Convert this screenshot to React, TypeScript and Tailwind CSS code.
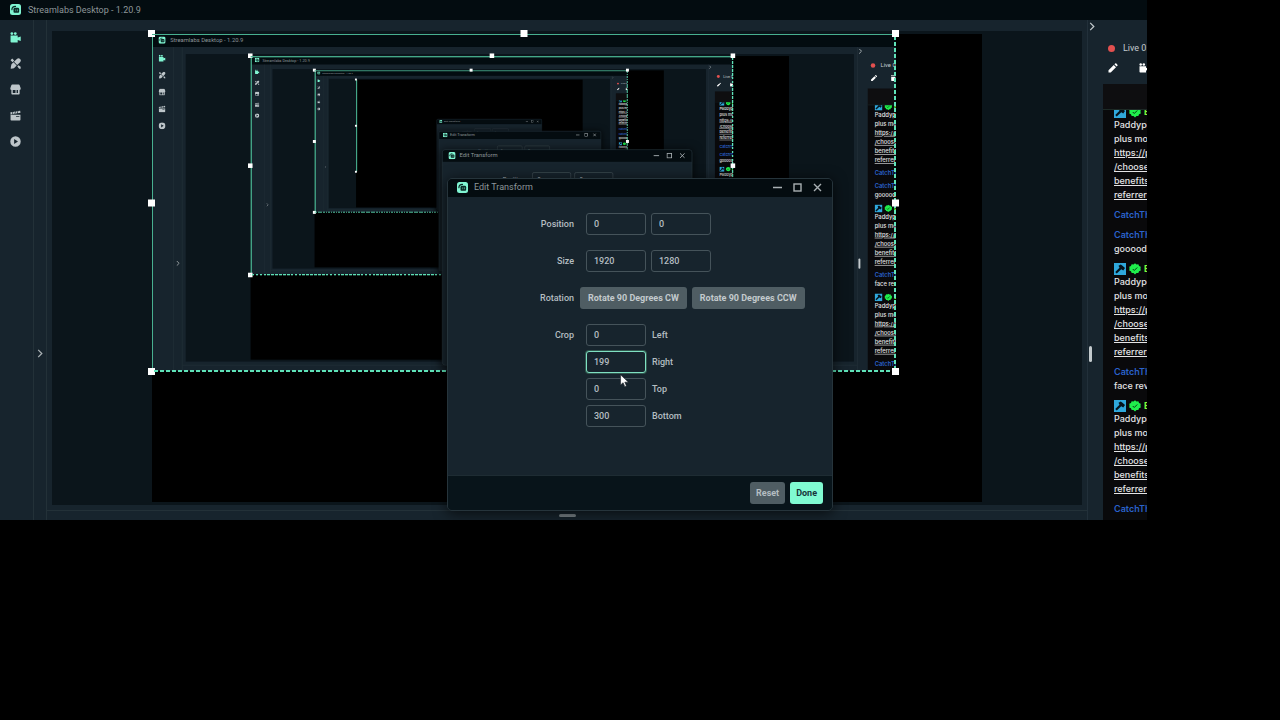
import { useId } from "react";
import type { ReactNode } from "react";

type IconProps = { className?: string };

// How many times the desktop is captured inside itself
const MAX_DEPTH = 3;

// Outline thickness grows with depth so the line stays visible once scaled down
const topLine = ["h-px", "h-[2px]", "h-[2px]", "h-[3px]"];
const leftLine = ["w-px", "w-[2px]", "w-[3px]", "w-[4px]"];

function Logo({ className }: IconProps) {
  return (
    <svg viewBox="0 0 22 22" className={className} aria-hidden="true">
      <rect width="22" height="22" rx="5" fill="#80f5d2" />
      <path d="M3.800 11.500C3.800 7.200 6.600 4.800 11 4.800" stroke="#0b2a27" strokeWidth="2.400" strokeLinecap="round" fill="none" />
      <path
        d="M7 10.500A2.800 2.800 0 0 1 9.800 7.700H15.500a2.800 2.800 0 0 1 2.800 2.800v5a2 2 0 0 1-2 2H9a2 2 0 0 1-2-2z"
        fill="#0b2a27"
      />
      <path d="M11.500 11.500v2.300M15 11.500v2.300" stroke="#80f5d2" strokeWidth="1" strokeLinecap="round" />
    </svg>
  );
}

function CameraIcon({ className }: IconProps) {
  return (
    <svg viewBox="0 0 20 20" className={className} fill="currentColor" aria-hidden="true">
      <circle cx="3.400" cy="2.800" r="2.500" />
      <circle cx="9.600" cy="2.800" r="2.500" />
      <path d="M1 6.300h13v3.600l5.500-1.700v8.200L14 14.500V19H2.500A1.500 1.500 0 0 1 1 17.500z" />
    </svg>
  );
}

function ThemesIcon({ className }: IconProps) {
  return (
    <svg viewBox="0 0 20 20" className={className} fill="currentColor" aria-hidden="true">
      <path d="M12.500 1.700a3.900 3.900 0 0 1 5.800 5.800L13 12.800 7.200 7zM6.300 7.900l5.800 5.800-4 4C6.200 19.300 3.500 19.500 1 19.300c1-1.500.3-4 1.700-7.800z" />
      <path d="M1 4 4 1l3.600 3.600-3 3zM13.300 15.200l2.200-2.200 3.900 2.800v3.700h-2.800z" />
    </svg>
  );
}

function StoreIcon({ className }: IconProps) {
  return (
    <svg viewBox="0 0 20 20" className={className} fill="currentColor" aria-hidden="true">
      <path
        d="M4 1h12a1.500 1.500 0 0 1 1.400 1L19.500 7.500a2.800 2.800 0 0 1-2 3.200V17.500a1.500 1.500 0 0 1-1.500 1.500H4a1.500 1.500 0 0 1-1.500-1.500v-6.800a2.800 2.800 0 0 1-2-3.200L2.600 2A1.500 1.500 0 0 1 4 1zM5 11v5.500h5V11zm7 0v5.500h2.500V11z"
        fillRule="evenodd"
      />
    </svg>
  );
}

function ClapperIcon({ className }: IconProps) {
  return (
    <svg viewBox="0 0 20 20" className={className} fill="currentColor" aria-hidden="true">
      <path d="M.8 4.300 4.500 3.700 3.500 7.600 1 8zM5.700 3.500l3.500-.6-1 3.900-3.500.6zM10.400 2.700l3.500-.6-1 3.900-3.500.6zM15.100 1.900l3.400-.6.600 3.700-5 .8z" />
      <path
        d="M1 8.800h18v8.700a1.500 1.500 0 0 1-1.500 1.500h-15A1.500 1.500 0 0 1 1 17.500zm10 2.700v1.300h6v-1.300z"
        fillRule="evenodd"
      />
    </svg>
  );
}

function PlayIcon({ className }: IconProps) {
  return (
    <svg viewBox="0 0 20 20" className={className} fill="currentColor" aria-hidden="true">
      <path d="M10 .5a9.500 9.500 0 1 1 0 19 9.500 9.500 0 0 1 0-19zM7.500 5.500v9l7-4.500z" fillRule="evenodd" />
    </svg>
  );
}

function PencilIcon({ className }: IconProps) {
  return (
    <svg viewBox="0 0 20 20" className={className} fill="currentColor" aria-hidden="true">
      <path d="M1 14.500 11.500 4l4.500 4.500L5.500 19H1zM12.800 2.700l1.500-1.500a1.700 1.700 0 0 1 2.400 0l2.100 2.100a1.700 1.700 0 0 1 0 2.400L17.300 7.200z" />
    </svg>
  );
}

function Chevron({ className }: IconProps) {
  return (
    <svg viewBox="0 0 6 10" className={className} fill="none" stroke="currentColor" strokeWidth="1.400" aria-hidden="true">
      <path d="M1 1l4 4-4 4" />
    </svg>
  );
}

function HammerBadge() {
  return (
    <svg viewBox="0 0 24 24" className="size-3 shrink-0" aria-hidden="true">
      <rect width="24" height="24" fill="#2fa8dc" />
      <path d="M9 5.500 13.500 3 17 5.500 22 10l-3.500 5-4-2.500L5.500 21 2.500 18l8.500-8.500z" fill="#05131c" />
    </svg>
  );
}

function VerifiedBadge() {
  return (
    <svg viewBox="0 0 24 24" className="size-3 shrink-0" aria-hidden="true">
      <path
        d="M12 .5l3 2.300 3.700-.4 1.400 3.500 3.400 1.500-.5 3.700 .5 3.700-3.400 1.500-1.400 3.500-3.700 .4-3 2.800-3-2.800-3.700-.4-1.400-3.500L.5 14.800 1 11.100.5 7.400l3.400-1.500 1.400-3.500 3.700.4z"
        fill="#1fee4c"
      />
      <path d="M7.500 12l3 3L16.500 9" stroke="#063b12" strokeWidth="2" fill="none" />
    </svg>
  );
}

const navItems = [
  { label: "Editor", Icon: CameraIcon, active: true },
  { label: "Themes", Icon: ThemesIcon, active: false },
  { label: "App Store", Icon: StoreIcon, active: false },
  { label: "Highlighter", Icon: ClapperIcon, active: false },
  { label: "Recordings", Icon: PlayIcon, active: false },
];

function BotMessage() {
  return (
    <div>
      <div className="flex h-[13px] items-center gap-[3px] font-bold text-[#7dfa3c]">
        <HammerBadge />
        <VerifiedBadge />
        <span>B</span>
      </div>
      <p>Paddypo</p>
      <p>plus mor</p>
      <a href="#referral" className="block underline">
        https://p
        <br />
        /choose
        <br />
        benefits
        <br />
        referrerC
      </a>
    </div>
  );
}

function UserMessage({ text }: { text?: string }) {
  return (
    <div>
      <p className="font-semibold text-[#2a62cc]">CatchTh</p>
      {text && <p>{text}</p>}
    </div>
  );
}

function ChatPanel() {
  return (
    <div className="flex h-0 min-h-full min-w-0 flex-1 flex-col overflow-hidden">
      <div className="flex h-16 shrink-0 flex-col gap-[3px] pt-5 pl-[5px]">
        <div className="flex h-4 items-center gap-2">
          <span className="size-[7px] shrink-0 rounded-full bg-[#e2504f]" />
          <span className="text-[9px] leading-4 whitespace-nowrap text-[#c3cacd]">Live 0</span>
        </div>
        <div className="flex h-[18px] items-center gap-[21px] text-white">
          <button type="button" aria-label="Edit stream info" className="shrink-0">
            <PencilIcon className="size-[10px]" />
          </button>
          <button type="button" aria-label="Stream camera" className="shrink-0">
            <CameraIcon className="size-[10px]" />
          </button>
        </div>
      </div>
      <div className="h-[26px] shrink-0 border-b border-[#1d2a26] bg-[#0e0e10]" />
      <div className="min-h-0 flex-1 overflow-hidden bg-[#09090b] pl-[11px]">
        <div className="-mt-[5px] flex flex-col gap-[6px] font-['Inter',sans-serif] text-[9px] leading-[14px] font-medium whitespace-nowrap text-[#e4e4e6]">
          <BotMessage />
          <UserMessage />
          <UserMessage text="gooood" />
          <BotMessage />
          <UserMessage text="face rev" />
          <BotMessage />
          <UserMessage />
        </div>
      </div>
    </div>
  );
}

type NumberFieldProps = { id?: string; value: string; label?: string; focused?: boolean };

function NumberField({ id, value, label, focused }: NumberFieldProps) {
  return (
    <input
      id={id}
      type="text"
      aria-label={label}
      defaultValue={value}
      className={
        focused
          ? "h-[22px] w-[60px] rounded-[3px] border border-[#7fe0c2] bg-[#17242d] px-[7px] text-[#b4bdc1] ring-1 ring-[#31594f] outline-none"
          : "h-[22px] w-[60px] rounded-[3px] border border-[#45535a] bg-[#17242d] px-[7px] text-[#b4bdc1] outline-none"
      }
    />
  );
}

function FormRow({ label, children }: { label: string; children: ReactNode }) {
  return (
    <div className="flex">
      <span className="mr-3 w-[126px] shrink-0 text-right leading-[22px]">{label}</span>
      {children}
    </div>
  );
}

const cropFields = [
  { label: "Left", value: "0" },
  { label: "Right", value: "199" },
  { label: "Top", value: "0" },
  { label: "Bottom", value: "300" },
];

// A captured dialog is mostly covered by the one above it, so it keeps only its first row
function EditTransform({ captured }: { captured: boolean }) {
  const id = useId();

  return (
    <section
      aria-label="Edit Transform"
      className="absolute top-[178px] left-[447px] flex min-h-[333px] w-[386px] flex-col overflow-hidden rounded-[5px] border border-[#26343b] bg-[#17242d] text-[9px] leading-4 text-[#b4bdc1] shadow-[0_2px_14px_rgba(0,0,0,0.7)]"
    >
      <header className="flex h-[18px] items-center bg-[#040c10] pr-[10px] pb-[2px] pl-[9px] text-[#8d9699]">
        <Logo className="size-[11px]" />
        <h2 className="ml-[6px] flex-1">Edit Transform</h2>
        <div className="flex items-center gap-[11px] text-[#a9b0b3]">
          <button type="button" aria-label="Minimize">
            <svg viewBox="0 0 9 9" className="size-[9px]" stroke="currentColor" strokeWidth="1.400">
              <path d="M0 4.500h9" />
            </svg>
          </button>
          <button type="button" aria-label="Maximize">
            <svg viewBox="0 0 9 9" className="size-[9px]" stroke="currentColor" strokeWidth="1.400" fill="none">
              <rect x="1" y="1" width="7" height="7" />
            </svg>
          </button>
          <button type="button" aria-label="Close">
            <svg viewBox="0 0 9 9" className="size-[9px]" stroke="currentColor" strokeWidth="1.400">
              <path d="M1 1l7 7M8 1 1 8" />
            </svg>
          </button>
        </div>
      </header>

      <form className="flex flex-1 flex-col gap-[15px] pt-4 font-medium">
        <FormRow label="Position">
          <div className="flex gap-[5px]">
            <NumberField value="0" label="Position X" />
            <NumberField value="0" label="Position Y" />
          </div>
        </FormRow>
        {!captured && (
          <>
            <FormRow label="Size">
              <div className="flex gap-[5px]">
                <NumberField value="1920" label="Width" />
                <NumberField value="1280" label="Height" />
              </div>
            </FormRow>
            <FormRow label="Rotation">
              <div className="-ml-[6px] flex gap-[5px] font-bold text-[#c3cacd]">
                <button type="button" className="h-[22px] rounded-[3px] bg-[#4f5d63] px-2 whitespace-nowrap">
                  Rotate 90 Degrees CW
                </button>
                <button type="button" className="h-[22px] rounded-[3px] bg-[#4f5d63] px-2 whitespace-nowrap">
                  Rotate 90 Degrees CCW
                </button>
              </div>
            </FormRow>
            <FormRow label="Crop">
              <div className="flex flex-col gap-[5px]">
                {cropFields.map((field) => (
                  <div key={field.label} className="flex items-center gap-[6px]">
                    <NumberField id={`${id}-${field.label}`} value={field.value} focused={field.label === "Right"} />
                    <label htmlFor={`${id}-${field.label}`}>{field.label}</label>
                  </div>
                ))}
              </div>
            </FormRow>
          </>
        )}
      </form>

      {!captured && (
        <footer className="flex justify-end gap-[5px] border-t border-[#1e2c33] bg-[#08141a] px-[9px] py-[6px] font-bold">
          <button type="button" className="h-[22px] rounded-[3px] bg-[#4f5d63] px-[6px] text-[#b4bdc1]">
            Reset
          </button>
          <button type="button" className="h-[22px] rounded-[3px] bg-[#80fbd2] px-[6px] text-[#17343a]">
            Done
          </button>
        </footer>
      )}
    </section>
  );
}

const handle = "absolute size-[7px] bg-white";

function Selection({ depth }: { depth: number }) {
  const last = depth === MAX_DEPTH;

  return (
    <div className="pointer-events-none absolute inset-0">
      <div className={`absolute top-0 left-0 h-full bg-[#48b090] ${leftLine[depth]}`} />
      <span className={`${handle} -top-1 -left-1`} />
      <span className={`${handle} top-1/2 -left-1 -translate-y-1/2`} />
      <span className={`${handle} -bottom-1 -left-1`} />
      {!last && (
        <>
          <div className={`absolute top-0 left-0 w-full bg-[#48b090] ${topLine[depth]}`} />
          <div className="absolute top-0 right-0 h-full w-[2px] bg-[repeating-linear-gradient(180deg,transparent_0_2px,#5fe3b8_2px_6px)]" />
          <div className="absolute -bottom-px left-0 h-[2px] w-full bg-[repeating-linear-gradient(90deg,transparent_0_2px,#5fe3b8_2px_6px)]" />
          <span className={`${handle} -top-1 left-1/2 -translate-x-1/2`} />
          <span className={`${handle} -top-1 -right-[3px]`} />
          <span className={`${handle} top-1/2 -right-[3px] -translate-y-1/2`} />
          <span className={`${handle} -right-[3px] -bottom-1`} />
        </>
      )}
    </div>
  );
}

function Stage({ depth }: { depth: number }) {
  return (
    <div className="flex flex-1 justify-center bg-[#0b151b] py-[3px]">
      <div className="h-[468px] w-[830px] shrink-0 bg-black">
        <div className="relative h-[337px] w-[744px]">
          {depth < MAX_DEPTH && (
            <div className="h-full overflow-hidden" inert>
              <div className="w-[1147px] origin-top-left scale-[0.6487]">
                <DesktopWindow depth={depth + 1} />
              </div>
            </div>
          )}
          <Selection depth={depth} />
        </div>
      </div>
    </div>
  );
}

function DesktopWindow({ depth }: { depth: number }) {
  return (
    <div className="relative flex flex-col overflow-hidden bg-[#17242d]">
      <header className="flex h-5 items-center gap-[7px] bg-[#030c10] pb-px pl-[10px] text-[9px] leading-4 text-[#8d9699]">
        <Logo className="size-[11px]" />
        <h1>Streamlabs Desktop - 1.20.9</h1>
      </header>

      <div className="flex">
        <nav className="flex w-[33px] shrink-0 flex-col gap-[15px] pt-3 pl-[10px]">
          {navItems.map(({ label, Icon, active }) => (
            <button
              key={label}
              type="button"
              aria-label={label}
              className={active ? "size-[11px] text-[#80f5d2]" : "size-[11px] text-[#bdc5c9]"}
            >
              <Icon className="size-[11px]" />
            </button>
          ))}
        </nav>
        <div className="flex w-[14px] shrink-0 items-end justify-center border-x border-[#233138] pb-[162px]">
          <button type="button" aria-label="Expand sidebar" className="text-[#a9b0b3]">
            <Chevron className="h-[9px] w-[6px]" />
          </button>
        </div>

        <main className="min-w-0 flex-1">
          <div className="flex px-[5px] pt-[11px] pb-[5px]">
            <Stage depth={depth} />
          </div>
          <div className="flex h-[10px] items-center justify-center border-t border-[#233138] pb-px">
            <span className="h-[3px] w-[17px] rounded-full bg-[#7b858a]" />
          </div>
        </main>

        <aside className="flex w-[60px] shrink-0 border-l border-[#22303a]">
          <div className="flex w-[15px] shrink-0 flex-col pt-[2px] pb-[158px] pl-px">
            <button type="button" aria-label="Collapse chat" className="text-[#c3cacd]">
              <Chevron className="h-[9px] w-[6px]" />
            </button>
            <span className="mt-auto h-4 w-[3px] rounded-full bg-[#c3cacd]" />
          </div>
          <ChatPanel />
        </aside>
      </div>

      <EditTransform captured={depth > 0} />

      {depth === 0 && (
        <svg viewBox="0 0 16 24" className="absolute top-[374px] left-[620px] h-[14px] w-[9px]" aria-hidden="true">
          <path d="M1 1v18l4.500-4 3 7 3-1.300-3-6.700H15z" fill="#fff" stroke="#10181c" />
        </svg>
      )}
    </div>
  );
}

export default function App() {
  return (
    <div className="min-h-screen bg-black pr-[133px] font-['Roboto',sans-serif]">
      <DesktopWindow depth={0} />
    </div>
  );
}
